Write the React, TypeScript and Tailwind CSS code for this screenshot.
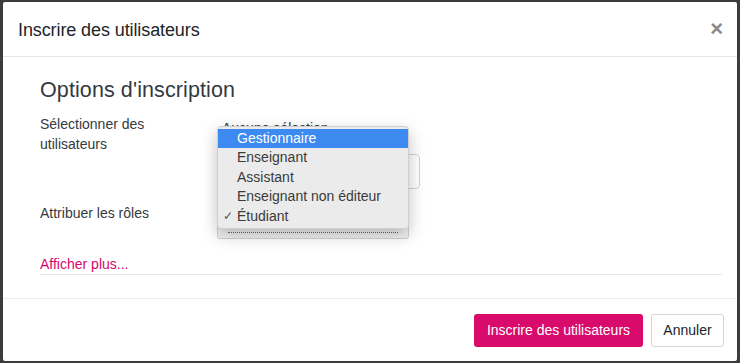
import React from "react";

export default function App() {
  const font = { fontFamily: '"Liberation Sans", Arial, sans-serif' };
  return (
    <div className="w-[740px] h-[363px] bg-[#3c3c3c] pt-[2px] pl-[3px] pr-[3px] pb-[2px] overflow-hidden" style={font}>
      <div className="w-full h-full bg-white flex flex-col rounded-[2px]">
        {/* header */}
        <div className="h-[55px] shrink-0 flex items-center justify-between pl-[15px] pr-[14px] pt-[3px] border-b border-[#e6e6e6]">
          <h1 className="text-[18px] text-[#212529] tracking-[-0.1px]">Inscrire des utilisateurs</h1>
          <span className="text-[22px] font-bold text-[#8a8a8a] leading-none -mt-[4px]">×</span>
        </div>
        {/* body */}
        <div className="flex-1 border-b border-[#ececec] pl-[37px] pr-[15px] pt-[20px]">
          <h2 className="text-[21.5px] text-[#343a40] leading-[26px] tracking-[0.1px]">Options d'inscription</h2>
          <div className="relative mt-[11px]">
            <div className="flex">
              <div className="w-[178px] text-[14px] leading-[20px] text-[#343a40]">
                Sélectionner des<br />utilisateurs
              </div>
              <div className="flex flex-col">
                <div className="text-[14px] text-[#343a40] leading-[16px] pl-[4px] mt-[6px]">Aucune sélection</div>
                <div className="mt-[18px] w-[202px] h-[35px] border border-[#ced4da] rounded-[4px] flex items-center justify-end pr-[9px]">
                  <span className="text-[8px] text-[#495057]">▼</span>
                </div>
              </div>
            </div>
            <div className="flex mt-[10px]">
              <div className="w-[177px] text-[14px] leading-[20px] text-[#343a40] pt-[4px]">Attribuer les rôles</div>
              <div className="w-[192px] h-[40px] border border-[#ced4da] rounded-[3px] bg-[#f3f3f3] flex items-end px-[10px] pb-[5px]">
                <div className="w-full border-b border-dotted border-[#666]" />
              </div>
            </div>
            {/* native dropdown menu overlay */}
            <div className="absolute left-[177px] top-[12px] w-[192px] bg-[#ebebeb] rounded-[4px] border border-[#cfcfcf] shadow-[0_6px_16px_rgba(0,0,0,0.25)] py-[2px] text-[14px] leading-[19.4px] text-[#3a3a3a]">
              <div className="bg-[#3d8af0] text-white pl-[19px]">Gestionnaire</div>
              <div className="pl-[19px]">Enseignant</div>
              <div className="pl-[19px]">Assistant</div>
              <div className="pl-[19px]">Enseignant non éditeur</div>
              <div className="pl-[5px] flex items-center">
                <span className="w-[14px] text-[12px] text-[#555]">✓</span>
                <span>Étudiant</span>
              </div>
            </div>
          </div>
          <div className="mt-[15px] text-[14px] text-[#d6076e] leading-[20px] border-b border-[#e6e6e6]">
            Afficher plus...
          </div>
        </div>
        {/* footer */}
        <div className="h-[62px] shrink-0 flex items-center justify-end gap-[8px] pr-[13px]">
          <button className="h-[33px] px-[11px] bg-[#d80a6c] text-white text-[14px] rounded-[3px] w-[169px]">Inscrire des utilisateurs</button>
          <button className="h-[33px] w-[73px] bg-white border border-[#d5d5d5] text-[#212529] text-[14px] rounded-[3px]">Annuler</button>
        </div>
      </div>
    </div>
  );
}
